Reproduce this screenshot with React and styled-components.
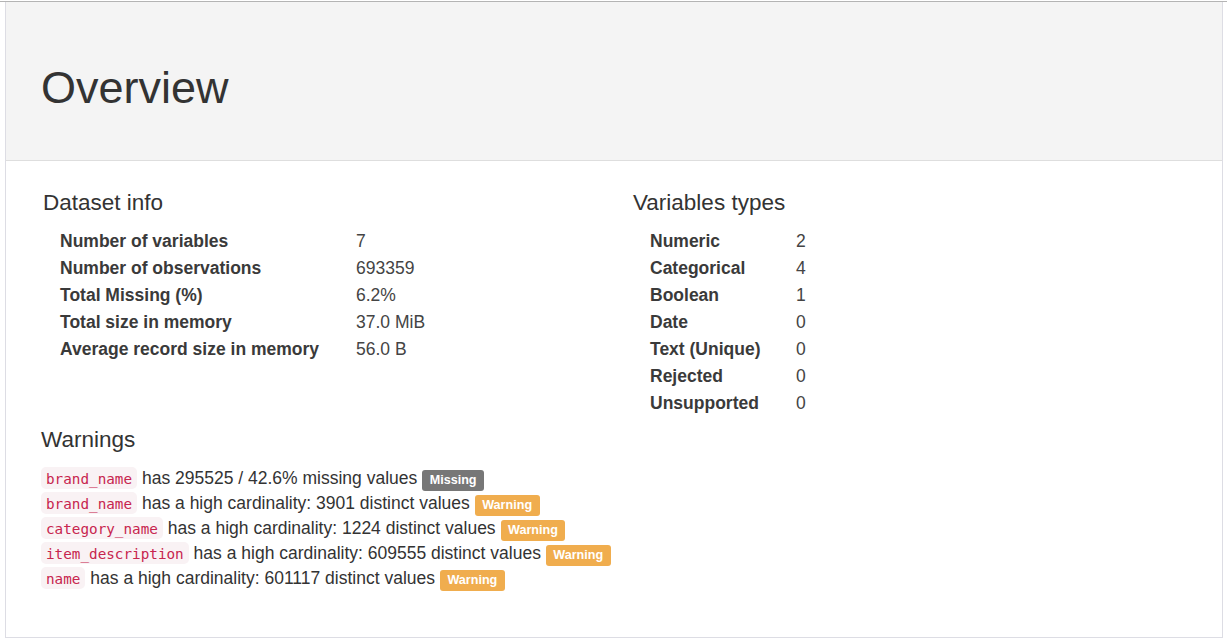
import React from 'react';
import styled, { createGlobalStyle } from 'styled-components';

const GlobalStyle = createGlobalStyle`
  html, body {
    margin: 0;
    padding: 0;
    background: #fff;
  }
  body {
    font-family: 'Liberation Sans', Arial, Helvetica, sans-serif;
    font-size: 17.5px;
    color: #333;
  }
  * { box-sizing: border-box; }
`;

const Page = styled.div`
  margin-top: 1px;
  border-top: 1px solid #b4b4b4;
  padding: 0 4px 0 5px;
`;

const Panel = styled.section`
  height: 636px;
  border: 1px solid #dddde4;
  border-top: none;
  display: flex;
  flex-direction: column;
`;

const PanelHeader = styled.header`
  height: 159px;
  background: #f4f4f4;
  border-bottom: 1px solid #dedede;
  padding: 63px 0 0 35px;
`;

const Title = styled.h1`
  margin: 0;
  font-size: 45px;
  line-height: 45px;
  font-weight: 400;
  color: #333;
`;

const PanelBody = styled.div`
  padding: 29px 0 0 37px;
`;

const Columns = styled.div`
  display: grid;
  grid-template-columns: 590px 1fr;
`;

const SectionTitle = styled.h4`
  margin: ${(p) => p.$top || 0}px 0 12.5px;
  font-size: 22.5px;
  line-height: 25px;
  font-weight: 400;
  color: #333;
`;

const WarningsSection = styled.div`
  margin-left: -2px;
`;

const StatsTable = styled.table`
  border-collapse: collapse;
  margin-left: 17px;
`;

const Row = styled.tr`
  height: 27px;
`;

const Label = styled.th`
  width: ${(p) => p.$width}px;
  padding: 0;
  text-align: left;
  font-weight: 700;
  line-height: 27px;
  color: #3a3a3a;
`;

const Value = styled.td`
  padding: 0;
  line-height: 27px;
  color: #444;
`;

const WarningList = styled.div`
  display: flex;
  flex-direction: column;
`;

const WarningLine = styled.div`
  height: 25px;
  line-height: 26px;
  white-space: nowrap;
`;

const Code = styled.code`
  font-family: 'DejaVu Sans Mono', 'Liberation Mono', monospace;
  font-size: 14.3px;
  line-height: 1;
  color: #c7254e;
  background: #f9f2f4;
  border-radius: 5px;
  padding: 3.5px 5px 2.5px;
`;

const Badge = styled.span`
  display: inline;
  font-size: 12.6px;
  font-weight: 700;
  line-height: 1;
  color: #fff;
  background: ${(p) => (p.$kind === 'missing' ? '#777' : '#f0ad4e')};
  border-radius: 3px;
  padding: 2.5px 7.5px 4px;
  vertical-align: baseline;
`;

const datasetInfo = [
  ['Number of variables', '7'],
  ['Number of observations', '693359'],
  ['Total Missing (%)', '6.2%'],
  ['Total size in memory', '37.0 MiB'],
  ['Average record size in memory', '56.0 B'],
];

const varTypes = [
  ['Numeric', '2'],
  ['Categorical', '4'],
  ['Boolean', '1'],
  ['Date', '0'],
  ['Text (Unique)', '0'],
  ['Rejected', '0'],
  ['Unsupported', '0'],
];

const warnings = [
  { col: 'brand_name', text: 'has 295525 / 42.6% missing values', kind: 'missing' },
  { col: 'brand_name', text: 'has a high cardinality: 3901 distinct values', kind: 'warning' },
  { col: 'category_name', text: 'has a high cardinality: 1224 distinct values', kind: 'warning' },
  { col: 'item_description', text: 'has a high cardinality: 609555 distinct values', kind: 'warning' },
  { col: 'name', text: 'has a high cardinality: 601117 distinct values', kind: 'warning' },
];

function Stats({ rows, labelWidth }) {
  return (
    <StatsTable>
      <tbody>
        {rows.map(([k, v]) => (
          <Row key={k}>
            <Label $width={labelWidth}>{k}</Label>
            <Value>{v}</Value>
          </Row>
        ))}
      </tbody>
    </StatsTable>
  );
}

export default function App() {
  return (
    <Page>
      <GlobalStyle />
      <Panel>
        <PanelHeader>
          <Title>Overview</Title>
        </PanelHeader>
        <PanelBody>
          <Columns>
            <div>
              <SectionTitle>Dataset info</SectionTitle>
              <Stats rows={datasetInfo} labelWidth={296} />
            </div>
            <div>
              <SectionTitle>Variables types</SectionTitle>
              <Stats rows={varTypes} labelWidth={146} />
            </div>
          </Columns>
          <WarningsSection>
            <SectionTitle $top={10.5}>Warnings</SectionTitle>
            <WarningList>
              {warnings.map((w, i) => (
                <WarningLine key={i}>
                  <Code>{w.col}</Code> {w.text}{' '}
                  <Badge $kind={w.kind}>{w.kind === 'missing' ? 'Missing' : 'Warning'}</Badge>
                </WarningLine>
              ))}
            </WarningList>
          </WarningsSection>
        </PanelBody>
      </Panel>
    </Page>
  );
}
